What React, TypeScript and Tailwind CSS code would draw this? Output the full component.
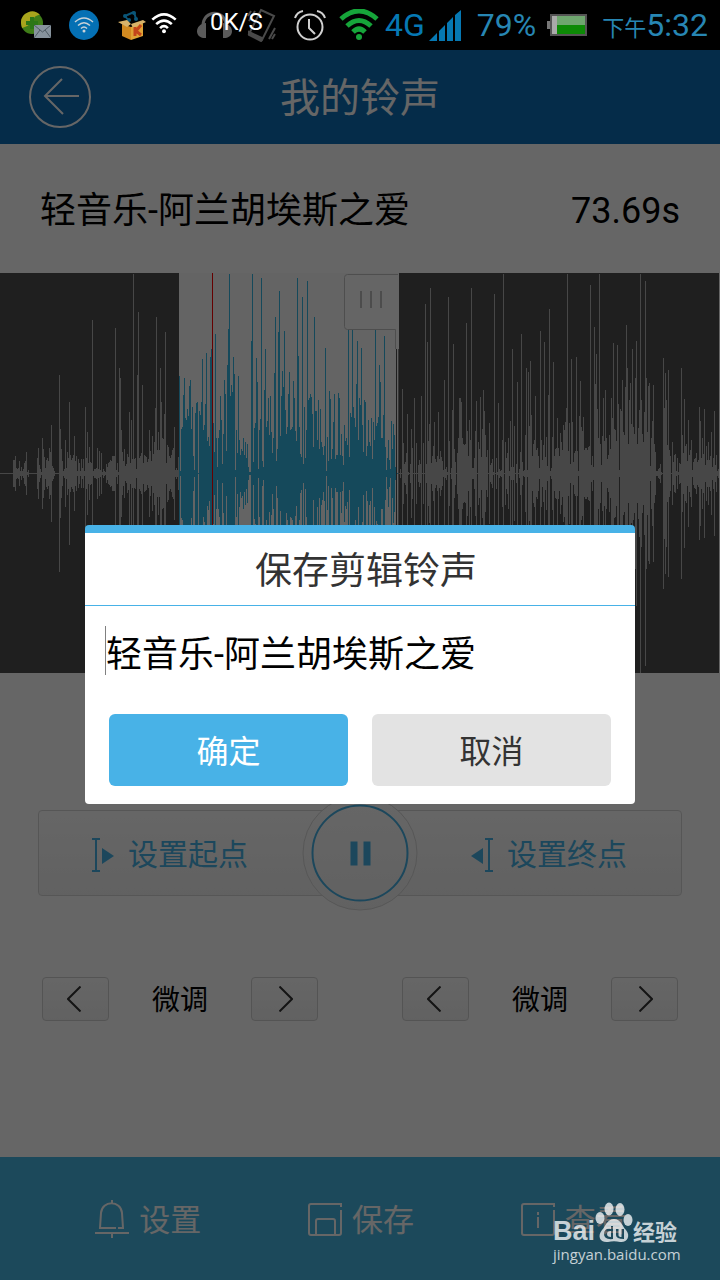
/**
 * App.tsx
 * Ringtone editor screen with the "save clip" dialog open
 */

import { useState } from 'react';
import type { ReactNode } from 'react';

const TRACK_NAME = '轻音乐-阿兰胡埃斯之爱';
const SELECTION = { start: 179, end: 399, cursor: 212 };

// Peak height per pixel column, one entry per run: [first column, peaks]
const PEAK_RUNS: [number, number[]][] = [
  [13, [13, 13, 17, 5, 4, 5, 12, 2, 6, 2, 4, 10, 12, 21, 1, 3]],
  [37, [15, 25, 8, 4, 1, 35, 24, 16, 5, 13, 15, 12, 25, 21, 48, 7, 5, 2]],
  [59, [98, 44, 24, 12, 2, 4, 33, 5, 21, 15, 71, 18, 13, 15, 18, 37, 12, 17, 2, 14, 10, 2, 14, 5, 14, 2]],
  [85, [66, 15, 41, 10, 26, 11, 10, 153, 2, 4, 4, 5, 25, 4, 22, 3, 20, 1, 4, 2, 1, 9, 6, 10, 11, 13, 12, 17, 17, 17, 145, 3, 10, 1]],
  [119, [105, 95, 43, 21, 12, 24, 7, 9, 19, 16, 61, 10, 53, 14, 199, 14, 15, 4, 98, 161, 15, 17, 20, 88, 10, 18, 17, 16, 11, 14, 43, 22, 12, 37, 19, 31, 65, 156]],
  [157, [23, 41, 23, 105, 71, 35, 34, 59, 141, 10, 28, 26, 17, 15, 18, 23, 25, 46, 3, 5, 3, 16]],
  [179, [97, 2, 44, 46, 78, 95, 55, 53, 64, 57, 87, 93, 44, 66, 17, 3, 60, 70, 71, 0, 62, 58, 71, 114, 43, 48, 69, 120, 32, 36, 27]],
  [210, [116, 124, 60, 50, 21, 139, 35, 6, 35, 43, 77, 53, 9, 39, 93, 79, 22, 108, 144, 199, 77, 88, 81, 116, 99, 3, 43, 20, 97]],
  [239, [33, 18, 24, 22, 35, 18, 31, 15, 29, 6, 1, 1, 132, 199, 11, 45, 50, 115, 91, 4, 43, 54, 195, 12, 6, 83, 124, 46, 52, 75]],
  [269, [38, 77, 41, 20, 35, 100, 156, 12, 24, 141, 182, 37, 77, 102, 86, 142, 63, 39, 46, 79, 101, 43, 44, 46, 92, 75, 42, 32]],
  [297, [195, 117, 46, 19, 16, 176, 9, 66, 15, 43, 192, 73, 75, 79, 76, 59, 26, 156, 62, 62, 33, 73, 24, 64, 31, 26, 18, 27]],
  [325, [125, 2, 36, 12, 82, 74, 14, 24, 51, 79, 14, 18, 18, 80, 75, 18, 39, 17, 8, 48, 32, 35, 28, 144, 16, 60, 56, 144]],
  [353, [66, 55, 46, 89, 132, 33, 75, 68, 125, 48, 21, 73, 71, 17, 27, 53, 31, 27, 55, 14, 51, 33, 144, 47, 50, 56, 108, 91]],
  [381, [35, 35, 58, 137, 26, 3, 15, 33, 13, 4, 52, 24, 49, 38, 6]],
  [400, [4, 0, 84, 30, 9, 11, 20, 59, 1, 0, 9, 44, 25, 0, 75, 0, 30, 0, 8, 13, 9, 77, 0, 30, 0, 169, 9, 131, 32, 49, 185, 10, 17, 27, 51, 14, 11, 17, 61, 14, 22, 16, 12]],
  [443, [3, 93, 4, 6, 1, 176, 32, 0, 5, 63, 129, 24, 11, 0, 20, 35, 75, 75, 71, 35, 29, 28, 29, 150, 42, 17, 53, 33, 185, 5, 5, 15, 42, 72, 0, 31, 24, 76, 16, 44, 83, 62, 38, 16, 23]],
  [489, [50, 8, 10, 14, 1, 179, 0, 15, 1, 70, 4, 2, 3, 33, 199, 0, 31, 15, 20, 35, 2, 52, 6, 124, 6, 47, 0, 9, 91, 0, 4, 21, 139, 11, 2, 3]],
  [525, [38, 105, 3, 101, 47, 112, 58, 17, 29, 33, 77, 23, 25, 17, 5, 142, 33, 13, 28, 131, 16, 36, 7, 78, 164, 2, 5, 36, 111, 17, 24, 25, 55, 25, 17, 40, 31, 23]],
  [563, [48, 43, 51, 65, 199, 22, 50, 9, 114, 51, 11, 20, 22, 116, 22, 2, 57, 92, 46, 42, 56, 23, 25, 25, 23, 26, 27, 188, 8, 17, 6, 146, 89, 119, 64, 35, 199]],
  [600, [29, 8, 37, 75, 32, 83, 35, 14, 18, 38, 24, 75, 55, 130, 44, 43, 32, 128, 69, 3, 64, 62, 93, 41, 38, 86, 148, 105, 29, 73, 90, 49, 124, 46, 39, 95, 132, 29, 45, 63]],
  [640, [199, 73, 39, 31, 61, 192, 95, 41, 87, 90, 7, 35, 52, 88, 29, 21, 2, 2, 4, 5, 9, 1, 0, 115, 65, 100, 73, 28, 103, 23, 17, 0, 31, 11, 18, 19, 2, 15, 1, 10, 9]],
  [681, [105, 38, 20, 74, 27, 29, 12, 53, 18, 23, 33, 3, 11, 14, 15, 20, 11, 13, 66, 52, 15, 35, 19, 64, 8, 27, 13, 31, 13, 17, 41, 6, 15, 62, 8, 18, 2, 4]],
];

// One vertical stroke for every column inside [from, to)
function buildWavePath(from: number, to: number) {
  return PEAK_RUNS.flatMap(([first, peaks]) =>
    peaks.map((peak, i) => {
      const x = first + i;
      return x >= from && x < to && peak > 0 ? `M${x} ${200 - peak}h1V${201 + peak}h-1z` : '';
    })
  ).join('');
}

function Waveform() {
  const { start, end, cursor } = SELECTION;

  return (
    <svg
      viewBox="0 0 720 400"
      preserveAspectRatio="none"
      shapeRendering="crispEdges"
      className="block h-[400px] w-full"
      role="img"
      aria-label="波形"
    >
      <rect width="719" height="400" fill="#4f4f4f" />
      <rect y="200" width="719" height="1" fill="#b2b2b2" />
      <path d={buildWavePath(0, start) + buildWavePath(end, 720)} fill="#b2b2b2" />
      <rect x={start} width={end - start} height="400" fill="#f9f9f9" />
      <rect x={start} y="200" width={end - start} height="1" fill="#35b6e3" />
      <path d={buildWavePath(start, end)} fill="#35b6e3" />
      <rect x={cursor} width="1" height="400" fill="#ff0000" />
      <rect x="396" y="76" width="1" height="324" fill="#4f4f4f" />
      <rect x="398" y="76" width="1" height="324" fill="#8a8a8a" />
      {/* end handle */}
      <path
        d="M347 1h52v75h-3V57h-49q-3 0-3-3V4q0-3 3-3z"
        fill="#fcfcfc"
        shapeRendering="auto"
      />
      <path
        d="M398 1.500H347.500q-3 0-3 3V53.500q0 3 3 3H395.500V76"
        fill="none"
        stroke="#c4c4c4"
        shapeRendering="auto"
      />
      <path d="M360 18h2v17h-2zM370 18h2v17h-2zM380 18h2v17h-2z" fill="#bdbdbd" />
    </svg>
  );
}

function WifiArcs({ className, thick = 3 }: { className: string; thick?: number }) {
  return (
    <svg viewBox="0 0 40 32" className={className} fill="none" stroke="currentColor" strokeWidth={thick} aria-hidden="true">
      <path d="M2 10Q20-6 38 10M8 17Q20 6 32 17M14 23Q20 17 26 23" />
      <circle cx="20" cy="28" r="3" fill="currentColor" stroke="none" />
    </svg>
  );
}

function StatusBar() {
  return (
    <div className="flex h-[50px] items-center overflow-hidden bg-black pr-3 pl-[21px] font-['Roboto','Noto_Sans_CJK_SC',sans-serif] leading-none">
      <svg viewBox="0 0 30 28" className="h-7 w-[30px] shrink-0" aria-hidden="true">
        <circle cx="11" cy="12" r="11" fill="#3f7d18" />
        <path d="M0 12a11 11 0 0 1 19-8C10 4 14 14 1 17z" fill="#a9a51d" />
        <path d="M9 6h4v4h4v4h-4v4H9v-4H5v-4h4z" fill="#2c7717" />
        <path d="M13 14h17v13H13z" fill="#87939d" />
        <path d="M13 14l8.500 7 8.500-7M13 27l6-8M30 27l-6-8" fill="none" stroke="#4e5a63" />
      </svg>
      <span className="ml-[18px] flex size-[30px] shrink-0 items-center justify-center rounded-full bg-[#0470b4] text-[#c9d2d8]">
        <WifiArcs className="h-4 w-5" />
      </span>
      <svg viewBox="0 0 28 30" className="ml-[19px] h-[30px] w-7 shrink-0" aria-hidden="true">
        <path d="M7 6l9-4M16 2l2 7M7 6l4 5" fill="none" stroke="#0a5578" strokeWidth="2" />
        <circle cx="7" cy="6" r="2" fill="#0a5578" />
        <circle cx="16" cy="3" r="2" fill="#0a5578" />
        <circle cx="11" cy="10" r="2" fill="#0a5578" />
        <circle cx="18" cy="9" r="2" fill="#0a5578" />
        <path d="M4 14l9 3v13l-9-4z" fill="#d28a20" />
        <path d="M13 17l12-4v13l-12 4z" fill="#e0a235" />
        <path d="M0 12l9-2 4 4-4 3zM13 14l12-4 3 2-13 6z" fill="#d8b36a" />
        <path d="M17 17v9M23 15l-5 6 5 4" fill="none" stroke="#c4451b" strokeWidth="3" />
      </svg>
      <WifiArcs className="mb-1 ml-[5px] h-[21px] w-[26px] shrink-0 text-white" thick={4} />
      <div className="relative ml-5 flex shrink-0 items-center gap-[15px]">
        <svg viewBox="0 0 35 28" className="h-7 w-[35px]" aria-hidden="true">
          <path d="M6 15C6-2 29-2 29 15" fill="none" stroke="#5b5b5b" strokeWidth="3" />
          <path d="M9 12v15c-12 1-12-14 0-15zM26 12v15c12 1 12-14 0-15z" fill="#5b5b5b" />
        </svg>
        <svg viewBox="0 0 30 34" className="h-[34px] w-[30px]" fill="none" stroke="#4a4a4a" strokeWidth="2" aria-hidden="true">
          <path d="M14 2l13 6-12 24-13-6z" />
          <path d="M2 24l13 6-1 3-12-6z" fill="#4a4a4a" />
          <path d="M28 20l-6 11M28 26l-3 5M8 3L2 13M4 3L1 8" />
        </svg>
        <span className="absolute top-0.5 left-[13px] text-2xl leading-none whitespace-nowrap text-white">0K/S</span>
      </div>
      <svg viewBox="0 0 32 32" className="ml-[17px] size-8 shrink-0" fill="none" stroke="#d0d0d0" strokeWidth="2" aria-hidden="true">
        <circle cx="16" cy="18" r="12.500" />
        <path d="M15 10v9l6 6M1 9q2-6 8-7M31 9q-2-6-8-7" />
      </svg>
      <WifiArcs className="ml-[13px] h-8 w-10 shrink-0 text-[#16a53a]" thick={5} />
      <span className="ml-1.5 text-[32px] text-[#0678b3]">4G</span>
      <svg viewBox="0 0 32 31" className="ml-1 h-[31px] w-8 shrink-0" fill="#0678b3" aria-hidden="true">
        <path d="M0 31l8-8v8zM10 21l6-6v16h-6zM18 13l6-6v24h-6zM26 5l6-5v31h-6z" />
      </svg>
      <span className="ml-4 text-[32px] text-[#2786b3]">79%</span>
      <svg viewBox="0 0 40 22" className="ml-[11px] h-[22px] w-10 shrink-0" aria-hidden="true">
        <path d="M0 7h3v8H0z" fill="#777" />
        <path d="M3 0h37v22H3z" fill="#555" />
        <path d="M5 2h33v18H5z" fill="#aaa" />
        <path d="M10 2h28v9H10z" fill="#6fa66f" />
        <path d="M10 11h28v9H10z" fill="#0d8a06" />
      </svg>
      <span className="ml-auto flex items-baseline text-[#2786b3]">
        <span className="text-[22px]">下午</span>
        <span className="text-[32px]">5:32</span>
      </span>
    </div>
  );
}

function MarkerIcon({ flipped = false }: { flipped?: boolean }) {
  return (
    <svg
      viewBox="0 0 22 34"
      className={flipped ? 'h-[34px] w-[22px] -scale-x-100' : 'h-[34px] w-[22px]'}
      fill="#46b2e5"
      aria-hidden="true"
    >
      <path d="M0 0h8v2H5v30h3v2H0v-2h3V2H0zM10 10l12 8-12 8z" />
    </svg>
  );
}

function NudgeButton({ direction }: { direction: 'back' | 'forward' }) {
  const isBack = direction === 'back';

  return (
    <button
      type="button"
      aria-label={isBack ? '向前微调' : '向后微调'}
      className={`flex h-11 w-[67px] items-center justify-center rounded border border-[#d2d2d2] bg-linear-to-b from-white to-[#f3f3f3] ${
        isBack ? 'pr-1' : 'pl-1'
      }`}
    >
      <svg viewBox="0 0 14 26" className="h-[26px] w-[14px]" fill="none" stroke="#333" strokeWidth="2" aria-hidden="true">
        <path d={isBack ? 'M13.500 0.500L1 13l12.500 12.500' : 'M0.500 0.500L13 13 0.500 25.500'} />
      </svg>
    </button>
  );
}

function FineTune() {
  return (
    <div className="flex items-center justify-between">
      <NudgeButton direction="back" />
      <span className="pt-1 text-[28px]">微调</span>
      <NudgeButton direction="forward" />
    </div>
  );
}

function FooterButton({ label, children }: { label: string; children: ReactNode }) {
  return (
    <button type="button" className="flex items-center justify-center gap-2.5 text-[31px] text-white">
      <svg viewBox="0 0 34 38" className="h-[38px] w-[34px]" fill="none" stroke="currentColor" strokeWidth="2" aria-hidden="true">
        {children}
      </svg>
      <span className="pt-1">{label}</span>
    </button>
  );
}

function SaveDialog() {
  const [name, setName] = useState(TRACK_NAME);

  return (
    <div
      role="dialog"
      aria-labelledby="save-title"
      className="w-full max-w-[550px] overflow-hidden rounded border-t-8 border-[#48b2e7] bg-white"
    >
      <h2
        id="save-title"
        className="flex h-[73px] items-center justify-center border-b border-[#48b2e7] pt-1 pl-3 text-[37px] text-[#333]"
      >
        保存剪辑铃声
      </h2>
      <div className="flex items-center px-5 pt-5">
        <span className="h-[49px] w-px shrink-0 bg-[#808080]" />
        <input
          type="text"
          aria-label="铃声名称"
          value={name}
          onChange={(e) => setName(e.target.value)}
          className="h-[49px] min-w-0 flex-1 bg-transparent text-4xl text-black outline-none"
        />
      </div>
      <div className="flex gap-6 px-6 pt-[39px] pb-[18px] text-[32px]">
        <button type="button" className="h-[72px] flex-1 rounded-md bg-[#48b2e7] pt-1 text-white">
          确定
        </button>
        <button type="button" className="h-[72px] flex-1 rounded-md bg-[#e3e3e3] pt-1 text-[#333]">
          取消
        </button>
      </div>
    </div>
  );
}

function Watermark() {
  return (
    <div className="pointer-events-none absolute right-[39px] bottom-4 w-[128px] text-white/75">
      <div className="flex items-end leading-none font-bold">
        <span className="font-['Liberation_Sans',sans-serif] text-[27px] leading-[26px]">Bai</span>
        <svg viewBox="0 0 38 42" className="h-[42px] w-[38px] shrink-0" fill="currentColor" aria-hidden="true">
          <ellipse cx="5" cy="16" rx="4.500" ry="6" />
          <ellipse cx="14" cy="7" rx="4.500" ry="6.500" />
          <ellipse cx="25" cy="7.500" rx="4.500" ry="6.500" />
          <ellipse cx="33" cy="18" rx="4.500" ry="6" />
          <path
            fillRule="evenodd"
            d="M19 17c7 0 8 7 12 11 5 6 1 13-6 12-4-1-8-1-12 0-8 1-11-6-6-12 4-4 5-11 12-11zM16 24v3q-7-1-7 5t9 5V24zm0 5v6q-4 0-4-3t4-3zM21 27v6q0 4 8 4V27h-2.500v8q-3 0-3-2v-6z"
          />
        </svg>
        <span className="font-['Noto_Sans_CJK_SC',sans-serif] text-[22px] leading-7 whitespace-nowrap">经验</span>
      </div>
      <div className="font-['Open_Sans',sans-serif] text-[15px] leading-5 font-medium">jingyan.baidu.com</div>
    </div>
  );
}

export default function App() {
  return (
    <div className="flex min-h-screen flex-col font-['Roboto','Noto_Sans_CJK_SC',sans-serif] leading-none">
      <StatusBar />
      <main className="relative flex flex-1 flex-col bg-white text-black">
        <header className="grid h-[94px] grid-cols-[1fr_auto_1fr] items-center bg-[#0d6eb6] px-7 text-white">
          <button type="button" aria-label="返回" className="size-16">
            <svg viewBox="0 0 64 64" className="size-16" fill="none" stroke="currentColor" strokeWidth="2" aria-hidden="true">
              <circle cx="32" cy="32" r="30" />
              <path d="M34 14L17 31l18 18M17 31h34" />
            </svg>
          </button>
          <h1 className="pt-1 text-[40px]">我的铃声</h1>
        </header>

        <div className="flex h-[129px] items-center justify-between px-10 pt-1 text-4xl">
          <span>{TRACK_NAME}</span>
          <span>73.69s</span>
        </div>

        <Waveform />

        <section className="flex flex-1 flex-col gap-[81px] px-[38px] pt-[137px]">
          <div className="relative flex h-[86px] rounded border border-[#d8d8d8] bg-linear-to-b from-white to-[#f3f3f3] pt-1 text-3xl text-[#46b2e5]">
            <button type="button" className="flex flex-1 items-center gap-[14px] pl-[53px]">
              <MarkerIcon />
              设置起点
            </button>
            <button type="button" className="flex flex-1 items-center justify-end gap-[14px] pr-[54px]">
              <MarkerIcon flipped />
              设置终点
            </button>
            <button
              type="button"
              aria-label="暂停"
              className="absolute top-1/2 left-1/2 flex size-[115px] -translate-x-1/2 -translate-y-1/2 items-center justify-center rounded-full border border-[#d8d8d8] bg-linear-to-b from-white to-[#f3f3f3]"
            >
              <span className="flex size-[97px] items-center justify-center gap-1.5 rounded-full border-2 border-[#46b2e5]">
                <span className="h-6 w-[7px] bg-[#46b2e5]" />
                <span className="h-6 w-[7px] bg-[#46b2e5]" />
              </span>
            </button>
          </div>
          <div className="grid grid-cols-2 gap-[84px] px-1">
            <FineTune />
            <FineTune />
          </div>
        </section>

        <footer className="grid h-[123px] grid-cols-3 bg-[#46b6e3] pr-10 pl-[42px]">
          <FooterButton label="设置">
            <path d="M23 28h5l-1-15C26 0 7 0 6 13L5 28h16M17 0v3M17 34v4M0 33h34" />
          </FooterButton>
          <FooterButton label="保存">
            <path d="M33 7V4H3Q1 4 1 6v27q0 2 2 2h28q2 0 2-2V10M8 35V21q0-2 2-2h15q2 0 2 2v14" />
          </FooterButton>
          <FooterButton label="查看">
            <path d="M33 7V4H3Q1 4 1 6v27q0 2 2 2h28q2 0 2-2V10M17 12v3M17 17v11" />
          </FooterButton>
        </footer>

        <div className="absolute inset-0 flex items-center justify-center bg-black/60 px-4 pb-px">
          <SaveDialog />
        </div>
        <Watermark />
      </main>
    </div>
  );
}
